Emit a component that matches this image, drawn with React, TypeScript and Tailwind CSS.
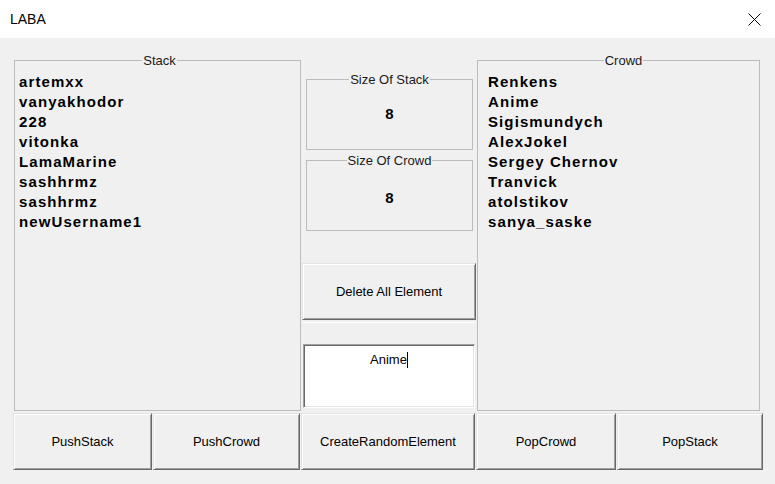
import React from 'react';

const stackItems = ['artemxx', 'vanyakhodor', '228', 'vitonka', 'LamaMarine', 'sashhrmz', 'sashhrmz', 'newUsername1'];
const crowdItems = ['Renkens', 'Anime', 'Sigismundych', 'AlexJokel', 'Sergey Chernov', 'Tranvick', 'atolstikov', 'sanya_saske'];

const btn =
  'flex items-center justify-center bg-[#f0f0f0] text-[13px] text-black border border-t-[#e3e3e3] border-l-[#e3e3e3] border-b-[#696969] border-r-[#696969] shadow-[inset_1px_1px_0_#ffffff,inset_-1px_-1px_0_#a0a0a0]';

function GroupList({ title, items, className }: { title: string; items: string[]; className: string }) {
  return (
    <fieldset className={`border border-[#bcbcbc] h-[358px] pt-[4px] ${className}`}>
      <legend className="mx-auto px-[1px] text-[13px] leading-[15px] text-[#1a1a1a]">{title}</legend>
      {items.map((item, i) => (
        <div key={i} className="text-[15px] leading-[20px] font-bold tracking-[1.1px] text-black">
          {item}
        </div>
      ))}
    </fieldset>
  );
}

function SizeBox({ title, value, className }: { title: string; value: number; className: string }) {
  return (
    <fieldset className={`border border-[#bcbcbc] h-[78px] flex items-center justify-center ${className}`}>
      <legend className="mx-auto px-[1px] text-[13px] leading-[15px] text-[#1a1a1a]">{title}</legend>
      <div className="w-full h-[55px] flex items-center justify-center text-[15px] font-bold text-black">{value}</div>
    </fieldset>
  );
}

export default function App() {
  return (
    <div className="w-[775px] h-[484px] bg-[#f0f0f0] overflow-hidden font-['Liberation_Sans',Arial,sans-serif]">
      {/* Title bar */}
      <div className="h-[38px] bg-white flex items-center justify-between pl-[10px] pr-[14px]">
        <span className="text-[14px] text-black">LABA</span>
        <svg width="13" height="13" viewBox="0 0 13 13">
          <path d="M0.5 0.5 L12.5 12.5 M12.5 0.5 L0.5 12.5" stroke="#000" strokeWidth="1" />
        </svg>
      </div>

      {/* Main area */}
      <div className="flex pl-[14px] pt-[15px]">
        <GroupList title="Stack" items={stackItems} className="w-[287px] pl-[4px]" />

        <div className="w-[174px] ml-[1px] flex flex-col">
          <SizeBox title="Size Of Stack" value={8} className="mt-[19px] mx-[4px] w-[167px]" />
          <SizeBox title="Size Of Crowd" value={8} className="mt-[3px] mx-[4px] w-[167px] pt-[3px]" />
          <button className={`${btn} h-[57px] mt-[32px]`}>Delete All Element</button>
          <div className="mt-[2px] border-t border-white h-[22px]" />
          <div className="h-[64px] mx-[1px] bg-white border border-t-[#a0a0a0] border-l-[#a0a0a0] border-b-[#ffffff] border-r-[#ffffff] shadow-[inset_1px_1px_0_#696969,inset_-1px_-1px_0_#e3e3e3] flex justify-center pt-[7px]">
            <span className="text-[13px] leading-[16px] text-black">Anime</span>
            <span className="w-[1px] h-[16px] bg-black" />
          </div>
        </div>

        <GroupList title="Crowd" items={crowdItems} className="w-[283px] ml-[1px] pl-[10px]" />
      </div>

      {/* Bottom buttons */}
      <div className="flex pl-[13px] mt-[2px] h-[57px]">
        <button className={`${btn} w-[139px]`}>PushStack</button>
        <button className={`${btn} w-[147px] ml-[1px]`}>PushCrowd</button>
        <button className={`${btn} w-[174px] ml-[1px]`}>CreateRandomElement</button>
        <button className={`${btn} w-[140px] ml-[1px]`}>PopCrowd</button>
        <button className={`${btn} w-[146px] ml-[1px]`}>PopStack</button>
      </div>
    </div>
  );
}
